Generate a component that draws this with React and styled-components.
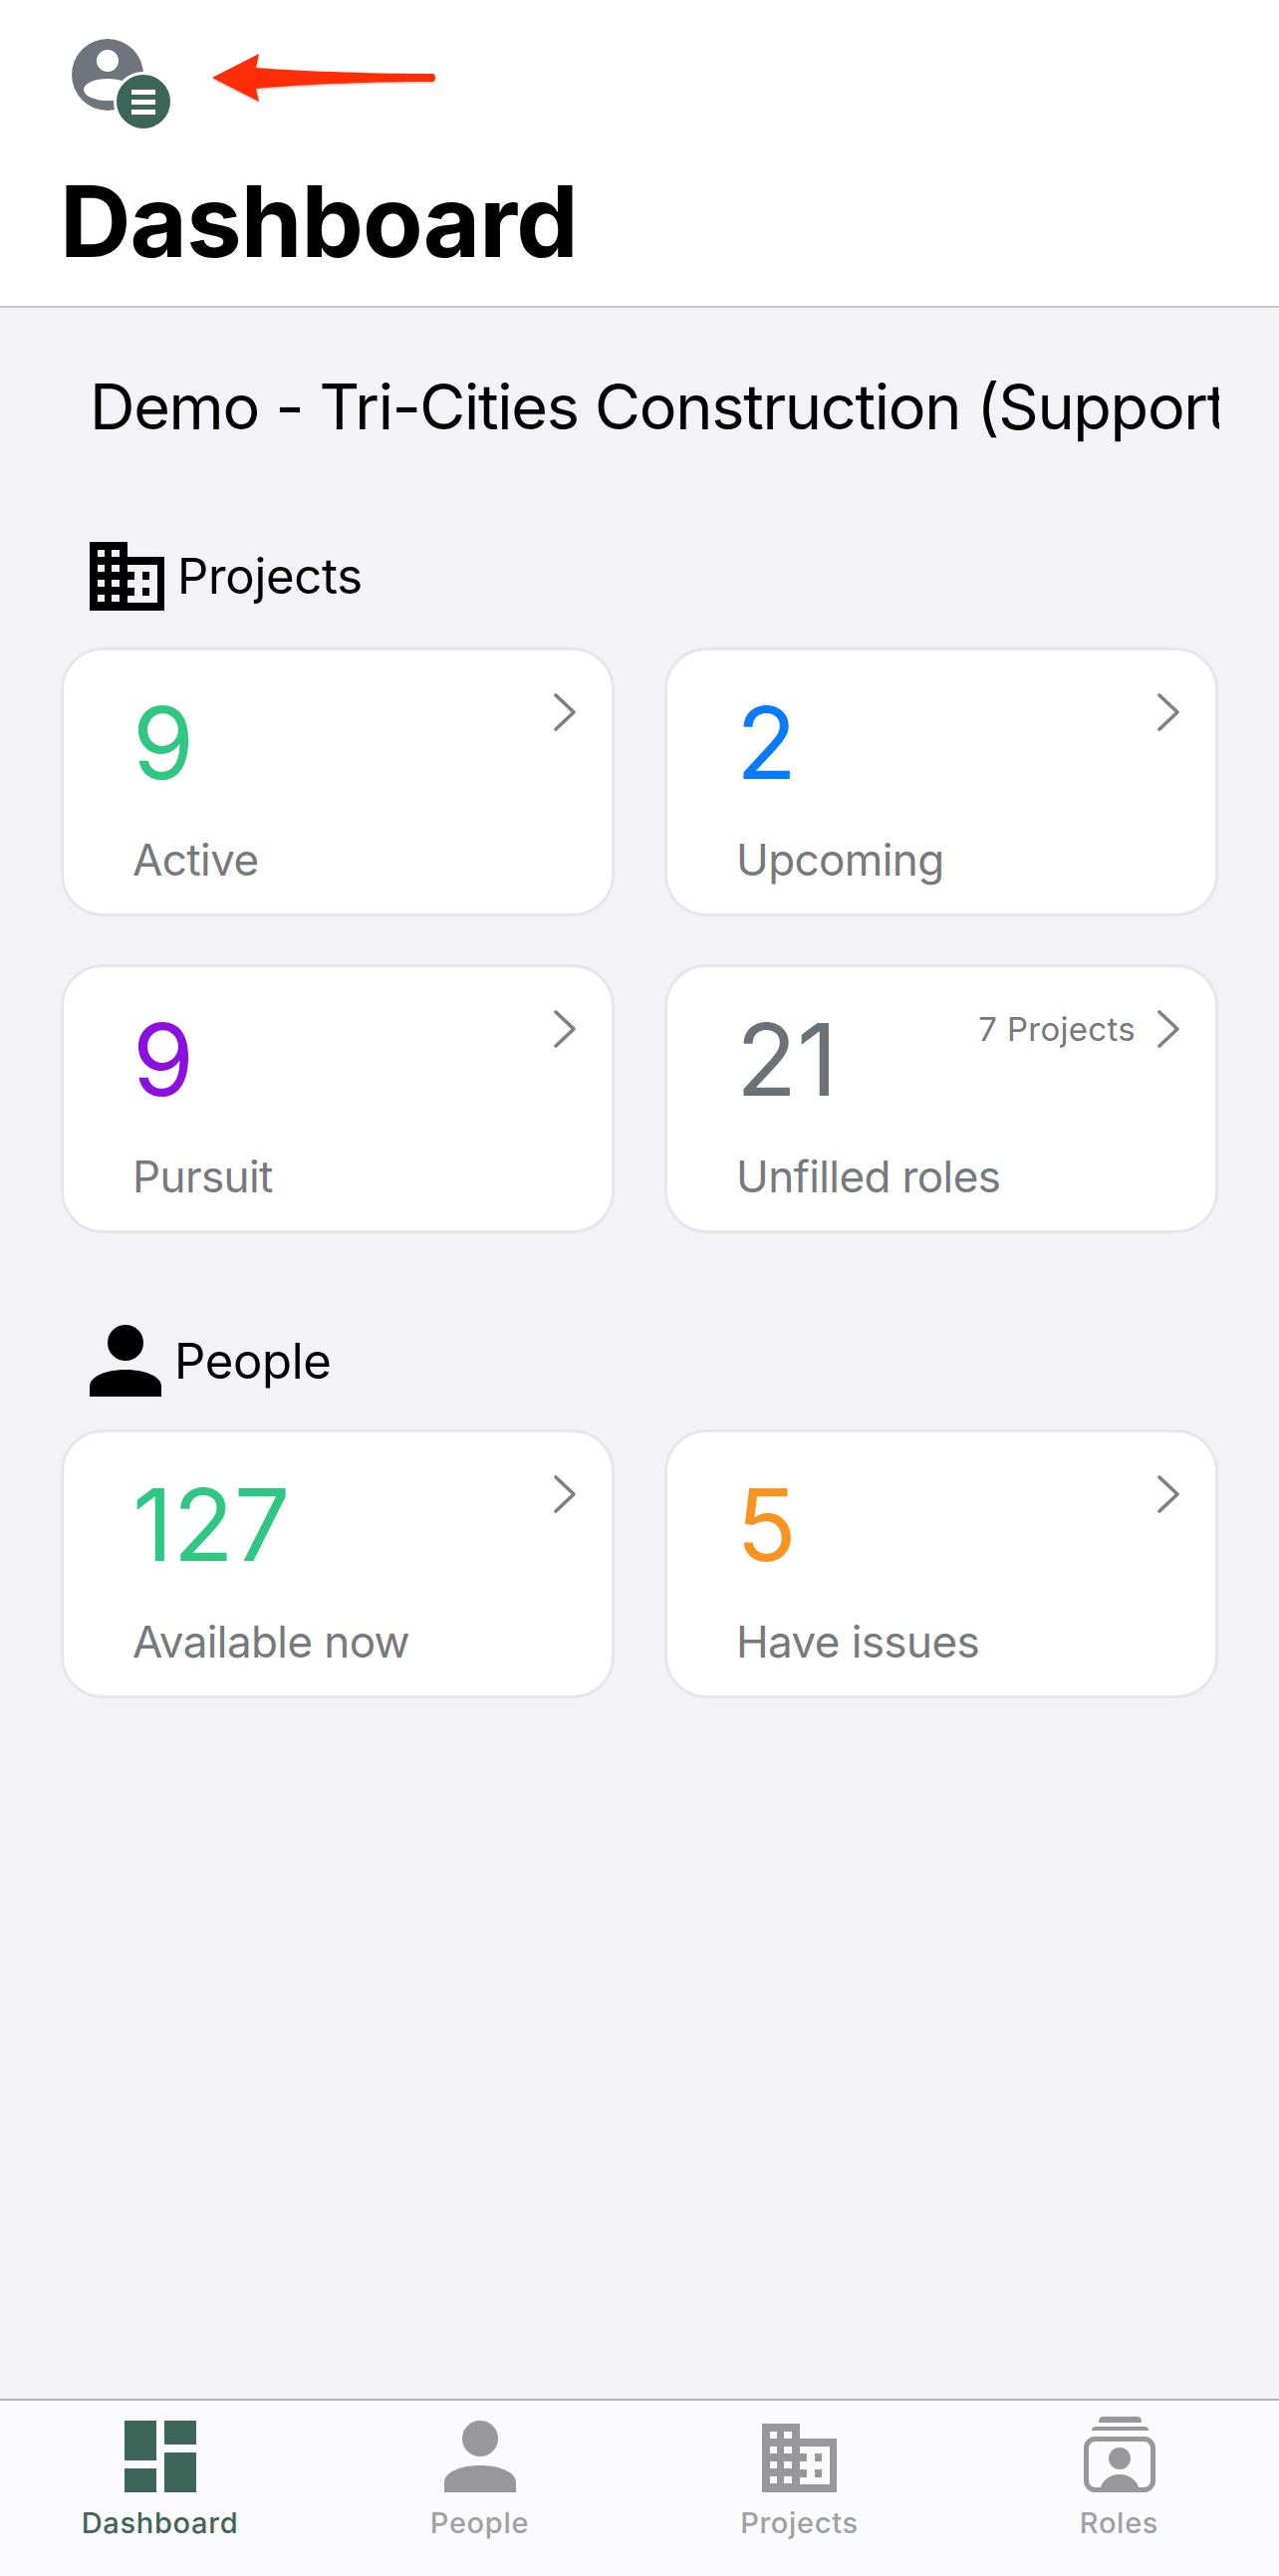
import React from "react";
import styled, { createGlobalStyle } from "styled-components";

const GlobalStyle = createGlobalStyle`
  html, body {
    margin: 0;
    padding: 0;
    background: #f2f2f7;
    font-family: Inter, "Noto Sans", "Liberation Sans", sans-serif;
    -webkit-font-smoothing: antialiased;
  }
  * { box-sizing: border-box; }
`;

const Page = styled.div`
  display: flex;
  flex-direction: column;
  height: 2586px;
  overflow: hidden;
  background: #f2f2f7;
`;

const Header = styled.header`
  position: relative;
  height: 309px;
  padding: 39px 0 0 60px;
  background: #fff;
  border-bottom: 2px solid #c6c6cb;
`;

const MenuButton = styled.div`
  position: relative;
  width: 72px;
  height: 72px;
  margin-left: 12px;
`;

const Badge = styled.div`
  position: absolute;
  left: 42px;
  top: 33px;
  width: 60px;
  height: 60px;
  display: flex;
  flex-direction: column;
  align-items: center;
  justify-content: center;
  gap: 5px;
  border-radius: 50%;
  background: #3d6658;
  border: 3px solid #fff;
`;

const BadgeLine = styled.span`
  display: block;
  width: 24px;
  height: 5px;
  background: #fff;
`;

const Arrow = styled.svg`
  position: absolute;
  left: 210px;
  top: 50px;
  filter: drop-shadow(0 1px 1px rgba(120, 40, 20, 0.35));
`;

const Title = styled.h1`
  margin: 51px 0 0;
  font-size: 99px;
  line-height: 120px;
  font-weight: 700;
  letter-spacing: -0.9px;
  color: #000;
`;

const Content = styled.main`
  flex: 1;
  padding: 0 61px;
`;

const CompanyName = styled.div`
  width: 1134px;
  margin: 60px 0 0 29px;
  font-size: 63px;
  line-height: 78px;
  letter-spacing: -1.3px;
  color: #000;
  white-space: nowrap;
  overflow: hidden;
`;

const Section = styled.section`
  margin-top: ${(p) => p.$top}px;
`;

const SectionHead = styled.div`
  display: flex;
  align-items: center;
  gap: ${(p) => p.$gap}px;
  height: 72px;
  padding-left: 29px;
  font-size: 49px;
  letter-spacing: -0.3px;
  color: #000;
`;

const CardGrid = styled.div`
  display: grid;
  grid-template-columns: 556px 556px;
  grid-auto-rows: 270px;
  column-gap: 50px;
  row-gap: 48px;
  margin-top: ${(p) => p.$top}px;
`;

const Card = styled.div`
  position: relative;
  padding: 33px 0 0 69px;
  background: #fff;
  border: 3px solid #e6e6eb;
  border-radius: 42px;
`;

const CardTop = styled.div`
  display: flex;
  justify-content: space-between;
  align-items: flex-start;
  padding-right: 36px;
`;

const Count = styled.div`
  font-size: 100px;
  line-height: 120px;
  font-weight: 400;
  color: ${(p) => p.$color};
`;

const CardMeta = styled.div`
  display: flex;
  align-items: center;
  gap: 22px;
  height: 36px;
  margin-top: 11px;
  font-size: 33px;
  letter-spacing: 0.3px;
  color: #77777c;
`;

const CardLabel = styled.div`
  margin-top: 30px;
  font-size: 44px;
  line-height: 54px;
  letter-spacing: -0.6px;
  color: #77797d;
`;

const TabBar = styled.nav`
  display: grid;
  grid-template-columns: repeat(4, 1fr);
  height: 178px;
  background: #fbfbfd;
  border-top: 2px solid #b4b4b8;
`;

const Tab = styled.div`
  display: flex;
  flex-direction: column;
  align-items: center;
  padding-top: 14px;
  font-size: 29px;
  font-weight: 500;
  letter-spacing: 0.7px;
  color: ${(p) => (p.$active ? "#3d6658" : "#a0a0a5")};
`;

const TabIcon = styled.div`
  display: flex;
  align-items: flex-end;
  justify-content: center;
  height: 78px;
  color: ${(p) => (p.$active ? "#3d6658" : "#98989b")};
`;

const TabLabel = styled.span`
  margin-top: 13px;
  line-height: 36px;
`;

function BuildingIcon() {
  return (
    <svg width="75" height="69" viewBox="0 0 75 69" fill="currentColor">
      <path
        fillRule="evenodd"
        d="M0 0H38V15H75V69H0Z
           M8 8V15H15V8Z M22 8V15H30V8Z
           M8 23V30H15V23Z M22 23V30H30V23Z
           M8 38V45H15V38Z M22 38V45H30V38Z
           M8 53V60H15V53Z M22 53V60H30V53Z
           M38 23V61H68V23Z"
      />
      <rect x="38" y="30" width="7" height="8" />
      <rect x="38" y="46" width="7" height="8" />
      <rect x="53" y="30" width="7" height="8" />
      <rect x="53" y="46" width="7" height="8" />
    </svg>
  );
}

function PersonIcon() {
  return (
    <svg width="72" height="72" viewBox="0 0 72 72" fill="currentColor">
      <circle cx="36" cy="18" r="18" />
      <path d="M0 72V62C0 51 18 45 36 45S72 51 72 62V72Z" />
    </svg>
  );
}

function DashboardIcon() {
  return (
    <svg width="72" height="72" viewBox="0 0 72 72" fill="currentColor">
      <rect x="0" y="0" width="32" height="40" />
      <rect x="0" y="48" width="32" height="24" />
      <rect x="40" y="0" width="32" height="24" />
      <rect x="40" y="32" width="32" height="40" />
    </svg>
  );
}

function RolesIcon() {
  return (
    <svg width="72" height="76" viewBox="0 0 72 76" fill="currentColor">
      <path d="M15 6C15 2 16 0 20 0H53C57 0 58 2 58 6Z" />
      <path d="M8 14C8 11 10 10 13 10H60C63 10 65 11 65 14Z" />
      <rect x="2.5" y="22.5" width="67" height="51" rx="9" fill="none" stroke="currentColor" strokeWidth="5" />
      <circle cx="36" cy="42" r="11" />
      <path d="M16 74C18 64 26 58 36 58S54 64 56 74Z" />
    </svg>
  );
}

function Chevron() {
  return (
    <svg width="22" height="38" viewBox="0 0 22 38" fill="none" stroke="#808084" strokeWidth="3.6" strokeLinecap="round" strokeLinejoin="round">
      <path d="M2 2L20 19L2 36" />
    </svg>
  );
}

function StatCard({ count, color, label, meta }) {
  return (
    <Card>
      <CardTop>
        <Count $color={color}>{count}</Count>
        <CardMeta>
          {meta && <span>{meta}</span>}
          <Chevron />
        </CardMeta>
      </CardTop>
      <CardLabel>{label}</CardLabel>
    </Card>
  );
}

export default function App() {
  return (
    <Page>
      <GlobalStyle />
      <Header>
        <MenuButton>
          <svg width="72" height="72" viewBox="0 0 72 72">
            <circle cx="36" cy="36" r="36" fill="#70757d" />
            <circle cx="36" cy="22" r="11" fill="#fff" />
            <ellipse cx="36" cy="51" rx="24" ry="11" fill="#fff" />
          </svg>
          <Badge>
            <BadgeLine />
            <BadgeLine />
            <BadgeLine />
          </Badge>
        </MenuButton>
        <Arrow width="232" height="56" viewBox="0 0 232 56">
          <path
            d="M3 28L50 4L47 18C100 22 170 24 224 24C228 24 228 32 224 32C170 32 100 34 47 39L50 52Z"
            fill="#ff2d05"
          />
        </Arrow>
        <Title>Dashboard</Title>
      </Header>
      <Content>
        <CompanyName>Demo - Tri-Cities Construction (Support Account)</CompanyName>
        <Section $top={95}>
          <SectionHead $gap={13}>
            <BuildingIcon />
            Projects
          </SectionHead>
          <CardGrid $top={36}>
            <StatCard count="9" color="#2fc782" label="Active" />
            <StatCard count="2" color="#0a7aff" label="Upcoming" />
            <StatCard count="9" color="#8b10e0" label="Pursuit" />
            <StatCard count="21" color="#6c7178" label="Unfilled roles" meta="7 Projects" />
          </CardGrid>
        </Section>
        <Section $top={92}>
          <SectionHead $gap={13}>
            <PersonIcon />
            People
          </SectionHead>
          <CardGrid $top={33}>
            <StatCard count="127" color="#2fc782" label="Available now" />
            <StatCard count="5" color="#f7931e" label="Have issues" />
          </CardGrid>
        </Section>
      </Content>
      <TabBar>
        <Tab $active>
          <TabIcon $active><DashboardIcon /></TabIcon>
          <TabLabel>Dashboard</TabLabel>
        </Tab>
        <Tab>
          <TabIcon><PersonIcon /></TabIcon>
          <TabLabel>People</TabLabel>
        </Tab>
        <Tab>
          <TabIcon><BuildingIcon /></TabIcon>
          <TabLabel>Projects</TabLabel>
        </Tab>
        <Tab>
          <TabIcon><RolesIcon /></TabIcon>
          <TabLabel>Roles</TabLabel>
        </Tab>
      </TabBar>
    </Page>
  );
}
